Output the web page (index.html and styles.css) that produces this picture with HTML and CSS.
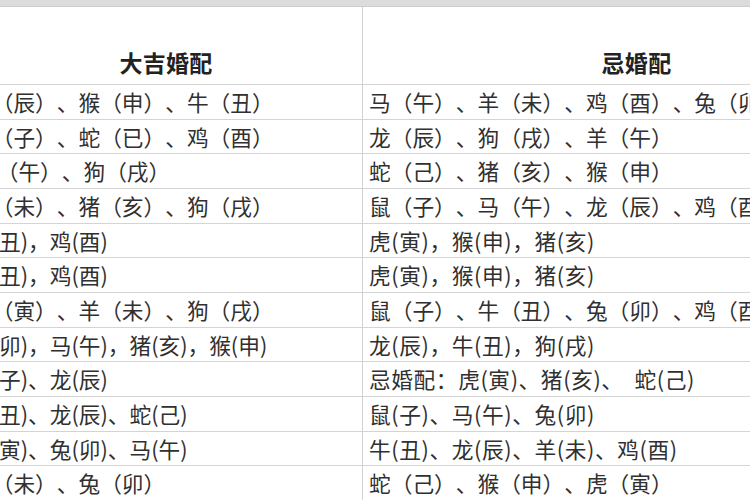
FILE: index.html
```html
<!DOCTYPE html>
<html lang="zh-CN">
<head>
<meta charset="utf-8">
<title>生肖婚配表</title>
<link rel="stylesheet" href="styles.css">
</head>
<body>
<div class="frame">
  <div class="topbar"></div>
  <div class="table">
    <div class="cell head left">大吉婚配</div>
    <div class="cell head right">忌婚配</div>

    <div class="cell left">龙（辰）、猴（申）、牛（丑）</div>
    <div class="cell right">马（午）、羊（未）、鸡（酉）、兔（卯）</div>

    <div class="cell left">鼠（子）、蛇（已）、鸡（酉）</div>
    <div class="cell right">龙（辰）、狗（戌）、羊（午）</div>

    <div class="cell left shifted">马（午）、狗（戌）</div>
    <div class="cell right">蛇（己）、猪（亥）、猴（申）</div>

    <div class="cell left">羊（未）、猪（亥）、狗（戌）</div>
    <div class="cell right">鼠（子）、马（午）、龙（辰）、鸡（酉）</div>

    <div class="cell left">牛(丑)，鸡(酉)</div>
    <div class="cell right loose">虎(寅)，猴(申)，猪(亥)</div>

    <div class="cell left">牛(丑)，鸡(酉)</div>
    <div class="cell right loose">虎(寅)，猴(申)，猪(亥)</div>

    <div class="cell left">虎（寅）、羊（未）、狗（戌）</div>
    <div class="cell right">鼠（子）、牛（丑）、兔（卯）、鸡（酉）</div>

    <div class="cell left">兔(卯)，马(午)，猪(亥)，猴(申)</div>
    <div class="cell right loose">龙(辰)，牛(丑)，狗(戌)</div>

    <div class="cell left">鼠(子)、龙(辰)</div>
    <div class="cell right loose">忌婚配：虎(寅)、猪(亥)、&nbsp;&nbsp;蛇(己)</div>

    <div class="cell left">牛(丑)、龙(辰)、蛇(己)</div>
    <div class="cell right loose">鼠(子)、马(午)、兔(卯)</div>

    <div class="cell left">虎(寅)、兔(卯)、马(午)</div>
    <div class="cell right loose">牛(丑)、龙(辰)、羊(未)、鸡(酉)</div>

    <div class="cell left">羊（未）、兔（卯）</div>
    <div class="cell right">蛇（己）、猴（申）、虎（寅）</div>
  </div>
</div>
</body>
</html>
```

FILE: styles.css
```css
html, body {
  margin: 0;
  padding: 0;
  background: #ffffff;
}

.frame {
  width: 750px;
  height: 500px;
  overflow: hidden;
  background: #ffffff;
  font-family: "Noto Sans CJK SC", "Noto Sans", sans-serif;
  color: #303030;
}

.topbar {
  height: 6px;
  background: #dcdcdc;
  border-bottom: 1px solid #cdcdcd;
}

.table {
  display: grid;
  grid-template-columns: 392px 548px;
  grid-template-rows: 77px repeat(12, 34.67px);
  margin-left: -30px;
  width: 940px;
}

.cell {
  display: flex;
  align-items: center;
  white-space: nowrap;
  overflow: hidden;
  font-size: 21.7px;
  line-height: 1;
  text-spacing-trim: space-all;
  font-kerning: none;
  border-top: 1px solid #d4d4d4;
  box-sizing: border-box;
}

.cell.shifted {
  padding-left: 5px;
}

.cell.loose {
  letter-spacing: 0.6px;
}

.cell.right {
  border-left: 1px solid #d2d2d2;
  padding-left: 6px;
}

.cell.head {
  border-top: none;
  justify-content: center;
  padding-top: 33px;
  font-size: 23px;
  font-weight: 700;
  color: #222222;
  letter-spacing: 0.3px;
}

.cell.head.left {
  padding-right: 0;
}

.cell.head.right {
  padding-left: 0;
}
```
